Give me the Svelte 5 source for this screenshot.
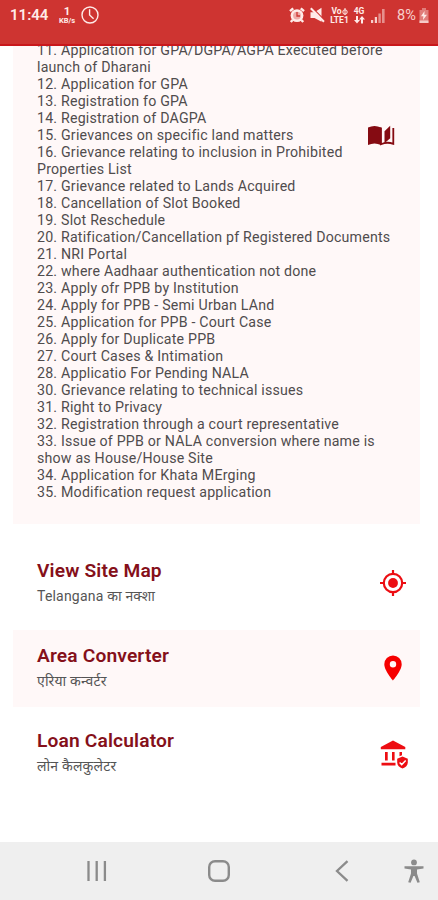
<script>
  const lines = [
    '11. Application for GPA/DGPA/AGPA Executed before',
    'launch of Dharani',
    '12. Application for GPA',
    '13. Registration fo GPA',
    '14. Registration of DAGPA',
    '15. Grievances on specific land matters',
    '16. Grievance relating to inclusion in Prohibited',
    'Properties List',
    '17. Grievance related to Lands Acquired',
    '18. Cancellation of Slot Booked',
    '19. Slot Reschedule',
    '20. Ratification/Cancellation pf Registered Documents',
    '21. NRI Portal',
    '22. where Aadhaar authentication not done',
    '23. Apply ofr PPB by Institution',
    '24. Apply for PPB - Semi Urban LAnd',
    '25. Application for PPB - Court Case',
    '26. Apply for Duplicate PPB',
    '27. Court Cases & Intimation',
    '28. Applicatio For Pending NALA',
    '30. Grievance relating to technical issues',
    '31. Right to Privacy',
    '32. Registration through a court representative',
    '33. Issue of PPB or NALA conversion where name is',
    'show as House/House Site',
    '34. Application for Khata MErging',
    '35. Modification request application'
  ];
  const cards = [
    { title: 'View Site Map', sub: 'Telangana का नक्शा', icon: 'target' },
    { title: 'Area Converter', sub: 'एरिया कन्वर्टर', icon: 'pin', tinted: true },
    { title: 'Loan Calculator', sub: 'लोन कैलकुलेटर', icon: 'bank' }
  ];
</script>

<div class="screen">
  <header>
    <span class="time">11:44</span>
    <span class="speed"><b>1</b><small>KB/s</small></span>
    <svg class="clock" width="18" height="18" viewBox="0 0 18 18" fill="none" stroke="currentColor" stroke-width="1.4">
      <circle cx="9" cy="9" r="8" /><path d="M8.6 3.2V9l4 3.8" />
    </svg>
    <span class="space"></span>
    <svg class="alarm" width="16" height="16" viewBox="0 0 16 16">
      <circle cx="8" cy="8.600" r="6.400" fill="currentColor" />
      <path d="M1 4.200 4.200 1.300M15 4.200l-3.200-2.900M3.600 13l-1.800 2M12.400 13l1.800 2" stroke="currentColor" stroke-width="2.400" />
      <circle cx="8" cy="8.600" r="3.900" fill="#ce3431" opacity=".35" />
      <path d="M8 5v4h3" fill="none" stroke="#ce3431" stroke-width="1.300" />
    </svg>
    <svg class="mute" width="15" height="16" viewBox="0 0 15 16" fill="currentColor">
      <path d="M.5 5.200h4L11.500.800v14L4.500 11h-4z" />
      <path d="m2.500 1 12 12.200" stroke="#ce3431" stroke-width="1.300" />
      <path d="m.8 1.200 13.200 13.500" stroke="currentColor" stroke-width="2" />
    </svg>
    <span class="net lte"><i>Vo<svg width="6" height="7" viewBox="0 0 6 7" fill="none" stroke="currentColor"><circle cx="3" cy="4" r="2.200" /><path d="M3 0v7" /></svg></i><i>LTE1</i></span>
    <span class="net data"><i>4G</i>
      <svg width="11" height="8" viewBox="0 0 11 8" fill="currentColor"><path d="M2 0h2v4h2L3 7.500 0 4h2zM7 7.500h2v-4h2L8 0 5 3.500h2z" /></svg>
    </span>
    <svg class="signal" width="14" height="14" viewBox="0 0 14 14" fill="currentColor">
      <path d="M0 11h2.200v3H0zM3.800 8H6v6H3.800z" /><path d="M7.400 4.500h2.400V14H7.400zM11 0h2.600v14H11z" opacity=".6" />
    </svg>
    <span class="percent">8%</span>
    <svg class="battery" width="10" height="15" viewBox="0 0 10 15">
      <path d="M3 0h4v2h2.500v13H.5V2H3z" fill="currentColor" opacity=".4" />
      <path d="M5.600 3 2 8.200h2.400L4 12l4-5.300H5.300z" fill="#ffebe8" /><path d="M.5 12.500h9V15h-9z" fill="#ffebe8" opacity=".7" />
    </svg>
  </header>

  <main>
    <section class="services">
      <div class="list">
        {#each lines as line}<div>{line}</div>{/each}
      </div>
      <svg class="book" width="27" height="23" viewBox="0 0 27 23" fill="#850b12">
        <path d="M0 2.500Q6.500-.700 13 2.500V20Q6.500 17 0 20z" />
        <path d="m16.500 6.200 5.700-5.500v12.600l-5.700 5z" />
        <path d="M13 2.500v16.700q6-2.700 12.300-.4V3" fill="none" stroke="#850b12" stroke-width="1.800" />
      </svg>
    </section>

    {#each cards as card}
      <section class="card" class:tinted={card.tinted}>
        <div>
          <h2>{card.title}</h2>
          <p>{card.sub}</p>
        </div>
        {#if card.icon === 'target'}
          <svg width="28" height="28" viewBox="0 0 28 28" fill="none" stroke="#ec0d12" stroke-width="2.200">
            <circle cx="14" cy="14" r="9.200" /><circle cx="14" cy="14" r="4.900" fill="#ec0d12" stroke="none" />
            <path d="M14 1v4M14 23v4M1 14h4M23 14h4" />
          </svg>
        {:else if card.icon === 'pin'}
          <svg width="28" height="28" viewBox="0 0 28 28">
            <path d="M14 1.500a8.700 8.700 0 0 0-8.700 8.800C5.300 16.700 14 26.600 14 26.600s8.700-9.900 8.700-16.300A8.700 8.700 0 0 0 14 1.500zm0 11.900a3.200 3.200 0 1 1 0-6.400 3.200 3.200 0 0 1 0 6.400z" fill="#f60000" />
          </svg>
        {:else}
          <svg class="bank" width="28" height="29" viewBox="0 0 28 29" fill="#ed0d12">
            <path d="M.8 9.200V7L13 .4 25.300 7v2.200zM5 12h2.700v8.500H5zM12 12h2.600v8.500H12zM19.500 12H22v3.300l-2.500 1zM1.500 22.800h14v2.600h-14z" />
            <path d="m22.500 16.500 5.300 2.300v3.800c0 2.800-2.200 5.200-5.300 6-3.100-.8-5.300-3.200-5.300-6v-3.800z" />
            <path d="m19.600 22.500 2.100 2.100 4-4.100" fill="none" stroke="#fff" stroke-width="1.500" />
          </svg>
        {/if}
      </section>
    {/each}
  </main>

  <nav>
    <svg class="recents" width="22" height="22" viewBox="0 0 22 22" stroke="#8b8b8b" stroke-width="2.300"><path d="M2.500 1v20M10.700 1v20M18.900 1v20" /></svg>
    <svg class="home" width="24" height="24" viewBox="0 0 24 24" fill="none" stroke="#8b8b8b" stroke-width="2.400"><rect x="2.200" y="2.200" width="19.600" height="19.600" rx="5.800" /></svg>
    <svg class="back" width="14" height="22" viewBox="0 0 14 22" fill="none" stroke="#8b8b8b" stroke-width="2.300"><path d="M12.500 1.200 2 11l10.500 9.800" /></svg>
    <svg class="person" width="20" height="24" viewBox="0 0 20 24" fill="#8b8b8b">
      <circle cx="10" cy="3.400" r="2.900" /><path d="M.5 7.200h19v2.200L13 10.500v4l2.800 8.800-2.400.5L10.600 17H9.400l-2.800 6.800-2.400-.5L7 14.500v-4L.5 9.400z" />
    </svg>
  </nav>
</div>

<style>
  :global(body) { margin: 0; background: #fff; }
  .screen {
    width: 438px; height: 900px; display: flex; flex-direction: column;
    overflow: hidden; background: #fff; font-family: Roboto, "Noto Sans", sans-serif;
  }
  svg { display: block; flex: none; }
  header {
    height: 46px; box-sizing: border-box; flex: none; display: flex; align-items: flex-start;
    padding: 6px 9px 0 10px; background: #ce3431; color: #ffebe8;
    border-bottom: 2px solid #c9171b;
  }
  .time { width: 38px; font-size: 15px; line-height: 19px; font-weight: 600; white-space: nowrap; }
  .speed { width: 18px; margin: 0 5px 0 10px; display: flex; flex-direction: column; align-items: center; }
  .speed b { font-size: 11.500px; line-height: 11px; }
  .speed small { font-size: 7.500px; line-height: 8px; font-weight: 700; }
  .space { flex: 1; }
  .alarm { margin-right: 5px; margin-top: 1px; }
  .mute { margin-right: 5px; margin-top: 1px; }
  .net { display: flex; flex-direction: column; align-items: center; font-size: 8.500px; line-height: 8.500px; font-weight: 700; margin-top: 1px; }
  .net i { font-style: normal; display: flex; align-items: center; }
  .lte { width: 19px; margin-right: 4px; }
  .data { width: 12px; margin-right: 6px; }
  .signal { margin: 3px 12px 0 0; opacity: .85; }
  .percent { width: 20px; font-size: 14.500px; line-height: 19px; opacity: .85; }
  .battery { margin: 2px 0 0 2px; }
  main { flex: 1; min-height: 0; overflow: hidden; padding: 0 18px 0 13px; }
  .services {
    height: 478px; display: flex; align-items: flex-start; justify-content: space-between;
    box-sizing: border-box; padding: 0 25px 0 24px; background: #fff8f8;
  }
  .list { width: 330px; margin-top: -4px; font-size: 14.200px; line-height: 17px; letter-spacing: .2px; color: #504c4d; white-space: nowrap; }
  .book { margin-top: 79px; }
  .card {
    height: 77px; margin-top: 8px; box-sizing: border-box; padding: 0 13px 0 24px;
    display: flex; justify-content: space-between;
  }
  .services + .card { margin-top: 21px; }
  .tinted { background: #fff8f8; }
  h2 { margin: 14px 0 0; font-size: 19.200px; line-height: 24px; font-weight: 600; letter-spacing: .15px; color: #85101a; }
  p { margin: 4px 0 0; font-size: 14px; line-height: 18px; color: #555; letter-spacing: .2px; white-space: nowrap; }
  .card svg { margin-top: 24px; }
  .card .bank { margin-top: 25px; margin-right: -1px; }
  nav { height: 58px; flex: none; display: flex; align-items: center; background: #efefef; }
  .recents { margin-left: 86px; }
  .home { margin-left: 99px; }
  .back { margin-left: 104px; }
  .person { margin-left: 55px; }
</style>
